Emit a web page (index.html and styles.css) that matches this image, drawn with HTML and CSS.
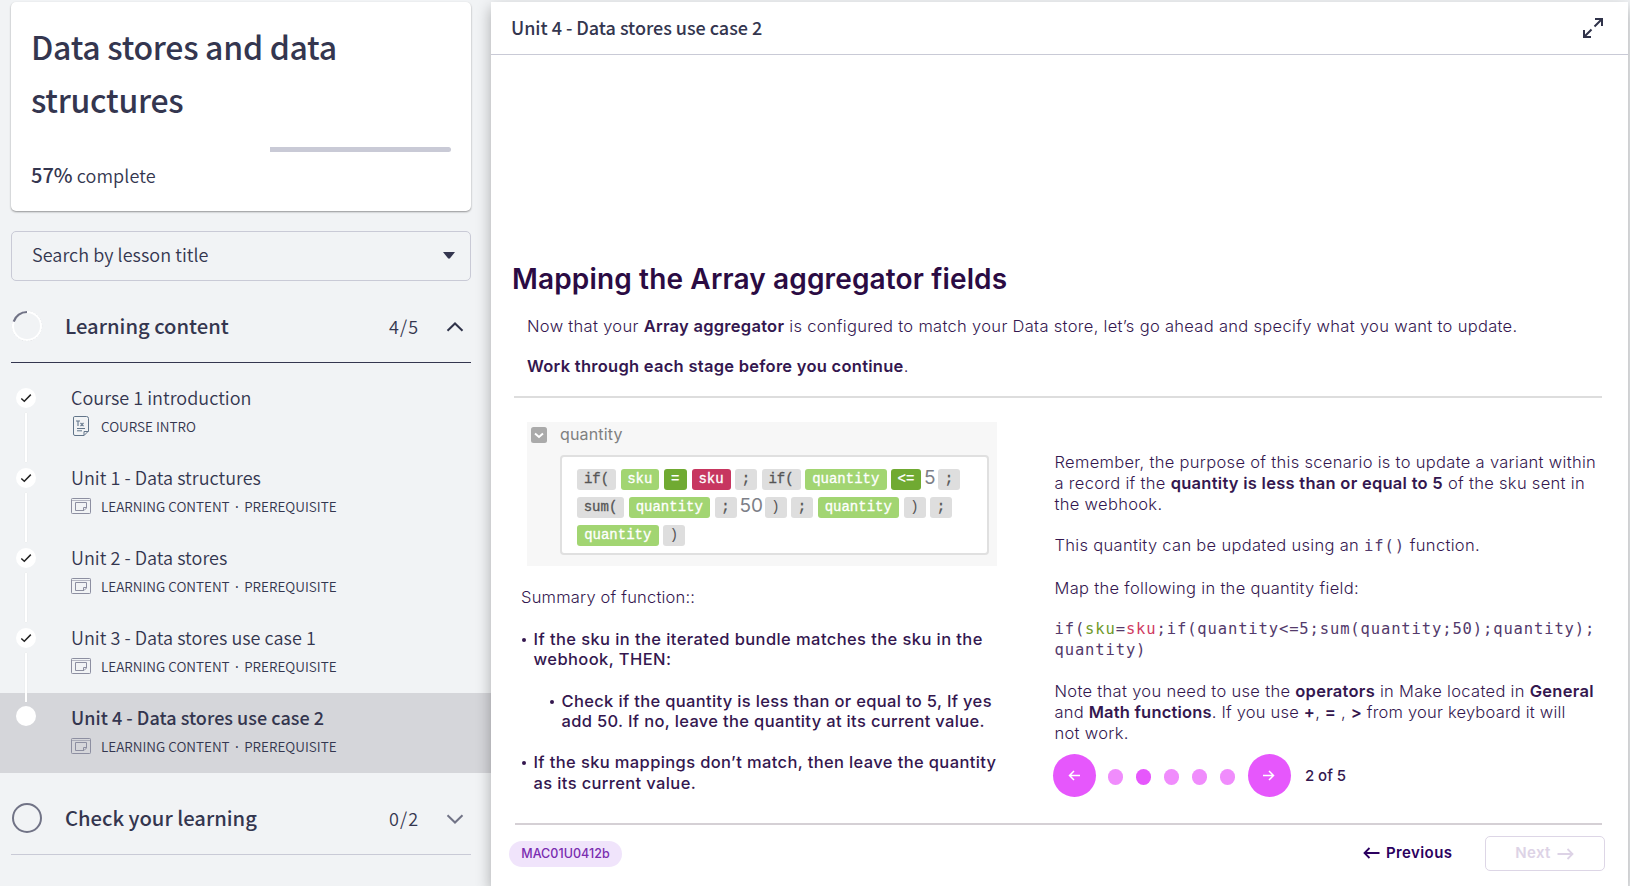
FILE: index.html
```
<!DOCTYPE html>
<html lang="en">
<head>
<meta charset="utf-8">
<title>Data stores and data structures</title>
<link rel="stylesheet" href="styles.css">
</head>
<body>
<svg class="defs" width="0" height="0">
  <symbol id="screen" viewBox="0 0 20 16"><g fill="none" stroke="currentColor"><rect x=".5" y=".5" width="19" height="15" rx=".8"/><path d="M1 2.500H19" opacity=".6"/><path d="M4.500 4.500H15.500V10L13 12.500H4.500ZM15.500 9.500H12.500V12.500"/></g></symbol>
  <symbol id="check" viewBox="0 0 20 20"><path d="M5.300 10.500L8.300 13.200L14.800 6.600" fill="none" stroke="#222" stroke-width="1.500"/></symbol>
</svg>
<div class="page">
  <aside class="sidebar">
    <section class="card">
      <h1 class="course">Data stores and data<br>structures</h1>
      <div class="progress"><div class="rest"></div></div>
      <p class="complete"><b>57%</b> complete</p>
    </section>
    <div class="search"><span>Search by lesson title</span>
      <svg width="12" height="7" viewBox="0 0 12 7"><path d="M0 0H12L7 6.300Q6 7.200 5 6.300Z" fill="#34364f"/></svg>
    </div>
    <div class="chapter open">
      <svg class="ring" width="32" height="32" viewBox="0 0 32 32" fill="none"><circle cx="16" cy="16" r="14.600" stroke="#c8cad0" stroke-dasharray="1 2"/><circle cx="16" cy="16" r="14" stroke="#fff" stroke-width="2"/><path d="M2.700 11.700A14 14 0 0 1 16 2" stroke="#717386" stroke-width="2.200"/></svg>
      <span class="name">Learning content</span><span class="count">4/5</span>
      <svg class="chev" width="18" height="10" viewBox="0 0 18 10"><path d="M1.500 8.800L9 1.500L16.500 8.800" fill="none" stroke="#30334a" stroke-width="2"/></svg>
    </div>
    <ul class="lessons">
      <li><div class="track"><svg class="dot"><use href="#check"/></svg><i></i></div>
        <div class="info"><div class="lt">Course 1 introduction</div>
        <div class="meta"><svg class="doc" width="20" height="20" viewBox="0 0 20 20" fill="none" stroke="#62758a"><path d="M3.500 .5H15.500Q17.500 .5 17.500 2.500V15L13 19.500H4Q2.500 19.500 2.500 18V2Q2.500 .5 3.500 .5ZM13 19.500V15.500H17.500M6 12.500H14M6 14.800H11"/><path d="M5 5H9M7 5V10M9.500 7L12.500 10.200M12.500 7L9.500 10.200" stroke-width="1.100"/></svg><span>COURSE INTRO</span></div></div></li>
      <li><div class="track"><svg class="dot"><use href="#check"/></svg><i></i></div>
        <div class="info"><div class="lt">Unit 1 - Data structures</div><div class="meta"><svg class="scr"><use href="#screen"/></svg><span>LEARNING CONTENT</span><em>·</em><span>PREREQUISITE</span></div></div></li>
      <li><div class="track"><svg class="dot"><use href="#check"/></svg><i></i></div>
        <div class="info"><div class="lt">Unit 2 - Data stores</div><div class="meta"><svg class="scr"><use href="#screen"/></svg><span>LEARNING CONTENT</span><em>·</em><span>PREREQUISITE</span></div></div></li>
      <li><div class="track"><svg class="dot"><use href="#check"/></svg><i></i></div>
        <div class="info"><div class="lt">Unit 3 - Data stores use case 1</div><div class="meta"><svg class="scr"><use href="#screen"/></svg><span>LEARNING CONTENT</span><em>·</em><span>PREREQUISITE</span></div></div></li>
      <li class="active"><div class="track"><svg class="dot"></svg></div>
        <div class="info"><div class="lt">Unit 4 - Data stores use case 2</div><div class="meta"><svg class="scr"><use href="#screen"/></svg><span>LEARNING CONTENT</span><em>·</em><span>PREREQUISITE</span></div></div></li>
    </ul>
    <div class="chapter closed">
      <svg class="ring" width="32" height="32" viewBox="0 0 32 32"><circle cx="16" cy="16" r="14" fill="none" stroke="#717386" stroke-width="2"/></svg>
      <span class="name">Check your learning</span><span class="count">0/2</span>
      <svg class="chev" width="18" height="10" viewBox="0 0 18 10"><path d="M1.500 1.200L9 8.500L16.500 1.200" fill="none" stroke="#717386" stroke-width="2"/></svg>
    </div>
  </aside>
  <main class="main">
    <header class="bar"><h2 class="unit">Unit 4 - Data stores use case 2</h2>
      <svg width="20" height="20" viewBox="0 0 20 20" fill="none" stroke="#30334a" stroke-width="2"><path d="M11.500 8.500L18.500 1.500M12 1H19V8M8.500 11.500L1.500 18.500M1 12V19H8"/></svg>
    </header>
    <article class="slide">
      <h3 class="head">Mapping the Array aggregator fields</h3>
      <div class="intro">
        <p class="i1">Now that your <b>Array aggregator</b> is configured to match your Data store, let’s go ahead and specify what you want to update.</p>
        <p class="i2"><b>Work through each stage before you continue</b>.</p>
      </div>
      <div class="cols">
        <div class="left">
          <div class="panel">
            <div class="field"><svg width="16" height="16" viewBox="0 0 16 16"><rect width="16" height="16" rx="2.500" fill="#aaa"/><path d="M4 6.500L8 10L12 6.500" fill="none" stroke="#fff" stroke-width="2"/></svg><span>quantity</span></div>
            <div class="formula">
              <div class="frow"><span class="chip w39">if(</span><span class="chip g w38">sku</span><span class="chip d w23">=</span><span class="chip r w39">sku</span><span class="chip w22">;</span><span class="chip w39">if(</span><span class="chip g w81">quantity</span><span class="chip d w30">&lt;=</span><span class="num n5">5</span><span class="chip w22">;</span></div>
              <div class="frow"><span class="chip w47">sum(</span><span class="chip g w81">quantity</span><span class="chip w22">;</span><span class="num n50">50</span><span class="chip w22 p">)</span><span class="chip w22">;</span><span class="chip g w81">quantity</span><span class="chip w22 p">)</span><span class="chip w22">;</span></div>
              <div class="frow"><span class="chip g w81">quantity</span><span class="chip w22 p">)</span></div>
            </div>
          </div>
          <p class="summary">Summary of function::</p>
          <ul class="points">
            <li>If the sku in the iterated bundle matches the sku in the<br>webhook, THEN:</li>
            <li class="sub">Check if the quantity is less than or equal to 5, If yes<br>add 50. If no, leave the quantity at its current value.</li>
            <li class="last">If the sku mappings don’t match, then leave the quantity<br>as its current value.</li>
          </ul>
        </div>
        <div class="right">
          <p>Remember, the purpose of this scenario is to update a variant within<br>a record if the <b>quantity is less than or equal to 5</b> of the sku sent in<br>the webhook.</p>
          <p>This quantity can be updated using an <code>if()</code> function.</p>
          <p>Map the following in the quantity field:</p>
          <p class="code">if(<em class="green">sku</em>=<em class="red">sku</em>;if(quantity&lt;=5;sum(quantity;50);quantity);<br>quantity)</p>
          <p>Note that you need to use the <b>operators</b> in Make located in <b>General</b><br><span class="tight">and <b>Math functions</b>. If you use <b>+</b>, <b>=</b> , <b>&gt;</b> from your keyboard it will</span><br>not work.</p>
          <div class="pager">
            <svg class="round" viewBox="0 0 43 43"><path d="M27 21.500H16.500M21 17L16.500 21.500L21 26"/></svg>
            <div class="dots"><i></i><i class="on"></i><i></i><i></i><i></i></div>
            <svg class="round" viewBox="0 0 43 43"><path d="M15 21.500H25.500M21 17L25.500 21.500L21 26"/></svg>
            <span>2 of 5</span>
          </div>
        </div>
      </div>
      <footer class="foot">
        <span class="badge">MAC01U0412b</span>
        <div class="prev"><svg width="17" height="12" viewBox="0 0 17 12"><path d="M16.500 6H1.500M6.500 1L1.500 6L6.500 11"/></svg><span>Previous</span></div>
        <div class="next"><span>Next</span><svg width="17" height="12" viewBox="0 0 17 12"><path d="M.5 6H15.500M10.500 1L15.500 6L10.500 11"/></svg></div>
      </footer>
    </article>
  </main>
</div>
</body>
</html>
```
FILE: styles.css
```
* { box-sizing: border-box; margin: 0; padding: 0; }
html { height: 886px; overflow: hidden; background: #f1f3f5; }
body { width: 1630px; height: 886px; overflow: hidden; background: #f1f3f5; font-family: "Noto Sans CJK SC", "Noto Sans", sans-serif; color: #34364f; }
.defs { position: absolute; }
.page { display: flex; height: 886px; padding: 2px 2px 0 0; }
svg { display: block; flex: none; }
.sidebar { width: 491px; flex: none; }
.card { margin-left: 11px; width: 460px; height: 209px; background: #fff; border-radius: 5px; padding: 18px 20px 0 20px; box-shadow: 0 1px 2px rgba(0,0,0,.4); }
.course { font-size: 32px; line-height: 53px; font-weight: 500; letter-spacing: -.29px; white-space: nowrap; }
.progress { display: flex; justify-content: flex-end; height: 5px; margin-top: 21px; }
.rest { width: 181px; background: #c9cad6; border-radius: 0 3px 3px 0; }
.complete { font-size: 18px; line-height: 30px; margin-top: 8px; font-weight: 350; letter-spacing: .1px; }
.complete b { font-weight: 500; font-size: 20px; letter-spacing: 0; }
.search { margin: 20px 0 0 11px; width: 460px; height: 50px; border: 1px solid #c9cad6; border-radius: 5px; display: flex; align-items: center; justify-content: space-between; padding: 0 15px 0 20px; font-size: 18px; font-weight: 350; line-height: 26px; }
.search span { margin-top: -4px; letter-spacing: .05px; }
.search svg { margin-top: -2px; }
.chapter { margin-left: 11px; width: 460px; height: 82px; padding-top: 10px; display: flex; align-items: center; border-bottom: 1px solid; }
.open { border-color: #34364f; }
.closed { border-color: #c9cad6; }
.ring { margin-top: -1px; }
.name { width: 324px; margin-left: 22px; font-size: 20.200px; font-weight: 500; line-height: 30px; }
.count { font-size: 18px; width: 56.500px; letter-spacing: 1.200px; font-weight: 350; }
.name, .count { margin-top: -1px; }
.lessons { list-style: none; padding-top: 10px; }
.lessons li { height: 80px; display: flex; padding: 15px 0 0 16px; }
.track { width: 20px; display: flex; flex-direction: column; align-items: center; }
.track i { width: 2px; height: 49px; background: #fff; margin-top: 5px; flex: none; box-shadow: 0 0 1px #ccc; position: relative; z-index: 1; }
.dot { width: 20px; height: 20px; border-radius: 50%; background: #fff; }
.info { margin-left: 35px; }
.lt { font-size: 18px; line-height: 26px; margin-top: -4px; font-weight: 350; white-space: nowrap; letter-spacing: .03px; }
.meta { display: flex; align-items: center; height: 20px; margin-top: 6px; font-size: 13.500px; font-weight: 350; white-space: nowrap; }
.meta svg { margin-right: 10px; }
.meta em { font: 400 14px "Noto Sans", sans-serif; width: 14.500px; text-align: center; }
.scr { width: 20px; height: 16px; color: #8d8fa1; }
.active { background: #d5d6da; }
.active .track { margin-top: -2px; }
.active .lt { font-weight: 500; }
.main { position: relative; width: 1137px; background: #fff; box-shadow: 0 6px 14px rgba(0,0,0,.3); }
.bar { height: 53px; border-bottom: 1px solid #c9cad6; display: flex; align-items: center; justify-content: space-between; padding: 0 25px 0 20px; }
.unit { font-size: 18px; font-weight: 500; line-height: 28px; margin-top: -3px; letter-spacing: -.03px; }
.slide { font-family: Inter, "Open Sans", sans-serif; color: #34174f; font-size: 16.500px; font-weight: 300; letter-spacing: .31px; line-height: 20.800px; padding: 204px 0 0 22px; white-space: nowrap; }
.slide b { font-weight: 600; letter-spacing: .27px; }
.head { font-size: 28px; line-height: 40px; font-weight: 600; letter-spacing: .15px; color: #2b0b43; margin-left: -1px; }
.intro { height: 99px; padding: 16.500px 0 0 13px; margin: 0 26px 0 1px; border-bottom: 2px solid #ddd; }
.i2 { margin-top: 20px; }
.cols { display: flex; height: 427px; border-bottom: 2px solid #d5d0d5; margin: 0 26px 0 2px; }
.left { width: 539.500px; padding: 24px 0 0 6px; }
.panel { width: 470px; height: 144px; background: #f7f7f7; margin: -.5px 0 0 6px; padding: 5px 0 0 4px; letter-spacing: 0; }
.field { display: flex; align-items: center; height: 16px; gap: 13px; color: #808080; font-size: 16px; font-weight: 400; letter-spacing: .15px; }
.formula { width: 429.500px; height: 100px; margin: 12px 0 0 28.500px; background: #fff; border: 2px solid #e0e0e0; border-radius: 4px; padding: 12px 0 0 15.500px; }
.frow { display: flex; height: 21px; margin-bottom: 7px; gap: 4.500px; }
.chip { height: 21px; border-radius: 3px; background: #dedede; color: #555; font: 400 14px/20px "Liberation Mono", monospace; -webkit-text-stroke: .3px; text-align: center; flex: none; }
.p { -webkit-text-stroke: 0; }
.g { background: #a2d572; color: #fff; }
.d { background: #70aa32; color: #fff; }
.r { background: #c73660; color: #fff; }
.w22 { width: 22px; } .w23 { width: 23.500px; } .w30 { width: 30px; } .w38 { width: 38.500px; } .w39 { width: 39px; } .w47 { width: 47px; } .w81 { width: 81.500px; }
.num { font-size: 19px; font-weight: 400; color: #7d7f88; line-height: 18px; margin: 0 -1.500px; text-align: center; }
.n5 { width: 11px; }
.n50 { width: 22px; }
.summary { margin-top: 21.500px; letter-spacing: .2px; }
.points { list-style: none; font-weight: 500; letter-spacing: .41px; line-height: 20.600px; margin-top: 21px; }
.points li { padding-left: 12.500px; margin-bottom: 20.600px; }
.points li::before { content: ""; float: left; width: 4px; height: 4px; border-radius: 50%; background: #34174f; margin: 9px 0 0 -12px; }
.points .sub { padding-left: 40.500px; letter-spacing: .34px; }
.points .last { letter-spacing: .37px; }
.right { padding-top: 54px; }
.right p { margin-bottom: 20.700px; }
.right code, .right .code { font-family: "DejaVu Sans Mono", monospace; font-size: 15.500px; letter-spacing: .87px; color: #533a6b; }
.right .tight, .right .tight b { letter-spacing: .2px; }
.code em { font-style: normal; }
.green { color: #6f9a2b; }
.red { color: #d03a62; }
.pager { display: flex; align-items: center; margin: -10px 0 0 -2px; font-weight: 500; font-size: 15px; letter-spacing: 0; }
.round { width: 43px; height: 43px; border-radius: 50%; background: #e657fc; fill: none; stroke: #fff; stroke-width: 1.500; }
.dots { display: flex; gap: 12.600px; margin: 2px 12.500px 0 12px; }
.dots i { width: 15.500px; height: 15.500px; border-radius: 50%; background: #f08cfc; }
.dots .on { background: #e657fc; }
.pager span { margin-left: 14px; }
.foot { display: flex; align-items: center; height: 57px; margin-left: -4px; font-weight: 600; font-size: 15px; }
.foot svg { fill: none; stroke: currentColor; stroke-width: 1.800; }
.badge { width: 113px; height: 26px; border-radius: 13px; background: #f0e4fb; color: #7a2db0; font-size: 12.500px; font-weight: 500; letter-spacing: .05px; line-height: 26px; text-align: center; flex: none; }
.prev { display: flex; align-items: center; gap: 6px; margin-left: 741px; width: 121.500px; color: #2b0060; letter-spacing: .4px; flex: none; }
.next { display: flex; align-items: center; justify-content: center; gap: 6px; width: 120px; height: 35px; border: 1.500px solid #ddd6e6; border-radius: 5px; color: #ddd3e6; flex: none; }
```
